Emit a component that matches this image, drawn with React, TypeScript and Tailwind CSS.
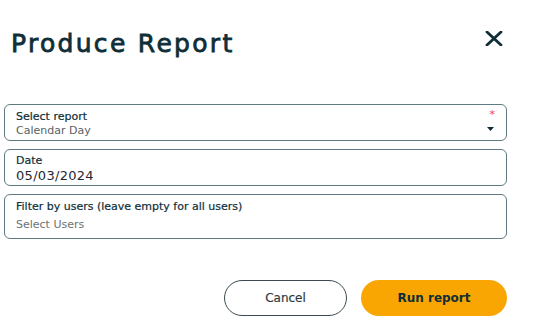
export default function App() {
  return (
    <div className="w-[535px] h-[326px] bg-white overflow-hidden font-['DejaVu_Sans',sans-serif] text-[#0f2e38]">
      {/* Header */}
      <div className="flex items-start justify-between pl-[11px] pr-[32px] pt-[29px]">
        <h1 className="text-[25px] leading-[30px] tracking-[2.3px] [-webkit-text-stroke:0.8px_#0f2e38]">Produce Report</h1>
        <svg width="18" height="15" viewBox="0 0 18 15" className="mt-[2px]">
          <path d="M2 1 L16 14 M16 1 L2 14" stroke="#0f2e38" strokeWidth="2.8" strokeLinecap="round" />
        </svg>
      </div>

      {/* Fields */}
      <div className="flex flex-col gap-[8px] pl-[4px] pr-[28px] mt-[45px]">
        <div className="relative h-[37px] border border-[#5f7a80] rounded-[6px] px-[11px] pt-[5px]">
          <div className="text-[11px] leading-[13px] [-webkit-text-stroke:0.2px_#0f2e38]">Select report</div>
          <div className="text-[11px] leading-[15px] text-[#5a6266]">Calendar Day</div>
          <span className="absolute right-[11px] top-[3px] text-[#ef4444] text-[11px] leading-[13px]">*</span>
          <svg width="7" height="4" viewBox="0 0 7 4" className="absolute right-[12px] top-[22px]">
            <path d="M0 0 L7 0 L3.5 4 Z" fill="#0f2e38" />
          </svg>
        </div>
        <div className="h-[37px] border border-[#5f7a80] rounded-[6px] px-[11px] pt-[4px]">
          <div className="text-[11px] leading-[13px] [-webkit-text-stroke:0.2px_#0f2e38]">Date</div>
          <div className="text-[13px] leading-[17px] text-[#1f2a30] tracking-[0.3px]">05/03/2024</div>
        </div>
        <div className="h-[45px] border border-[#5f7a80] rounded-[6px] px-[11px] pt-[5px]">
          <div className="text-[11px] leading-[13px] [-webkit-text-stroke:0.2px_#0f2e38]">Filter by users (leave empty for all users)</div>
          <div className="text-[11px] leading-[15px] text-[#6b7275] mt-[4px]">Select Users</div>
        </div>
      </div>

      {/* Actions */}
      <div className="flex justify-end gap-[14px] pr-[28px] mt-[41px]">
        <button className="w-[123px] h-[36px] rounded-full border border-[#3a4a50] text-[12px] text-[#2f3b40] [-webkit-text-stroke:0.2px_#2f3b40]">
          Cancel
        </button>
        <button className="w-[146px] h-[36px] rounded-full bg-[#f9a602] text-[12px] font-bold text-[#0f2e38]">
          Run report
        </button>
      </div>
    </div>
  );
}
